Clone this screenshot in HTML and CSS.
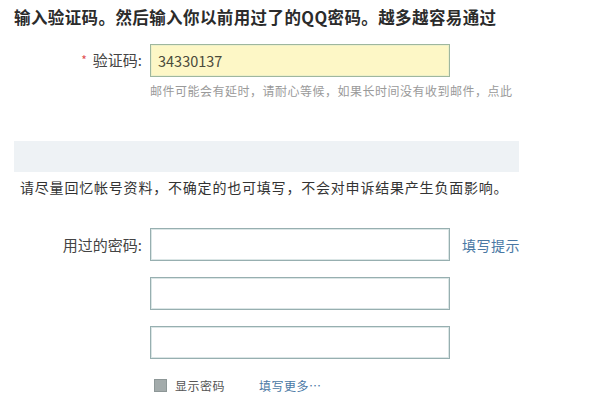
FILE: index.html
```html
<!DOCTYPE html>
<html lang="zh-CN">
<head>
<meta charset="utf-8">
<title>验证</title>
<link rel="stylesheet" href="styles.css">
</head>
<body>
<div class="page">
  <h1 class="title">输入验证码。然后输入你以前用过了的QQ密码。越多越容易通过</h1>

  <div class="row row-code">
    <label class="label"><span class="star">*</span>验证码:</label>
    <div class="field">
      <div class="input input-code">34330137</div>
      <p class="hint">邮件可能会有延时，请耐心等候，如果长时间没有收到邮件，点此</p>
    </div>
  </div>

  <div class="band"></div>

  <p class="intro">请尽量回忆帐号资料，不确定的也可填写，不会对申诉结果产生负面影响。</p>

  <div class="row row-pwd">
    <label class="label">用过的密码:</label>
    <div class="input"></div>
    <a class="link link-tip">填写提示</a>
  </div>
  <div class="row row-pwd">
    <span class="label"></span>
    <div class="input"></div>
  </div>
  <div class="row row-pwd">
    <span class="label"></span>
    <div class="input"></div>
  </div>

  <div class="row row-opts">
    <span class="label"></span>
    <span class="check"></span>
    <span class="check-text">显示密码</span>
    <a class="link link-more">填写更多…</a>
  </div>
</div>
</body>
</html>
```
FILE: styles.css
```css
html, body {
  margin: 0;
  padding: 0;
  background: #ffffff;
}

.page {
  padding: 7px 0 0 14px;
  font-family: "Noto Sans CJK SC", "Noto Sans", sans-serif;
  color: #333333;
}

.title {
  margin: 0;
  font-size: 16.5px;
  letter-spacing: 0.4px;
  line-height: 20px;
  font-weight: bold;
  color: #2b2b2b;
}

.row {
  display: flex;
  align-items: center;
}

.row-code {
  align-items: flex-start;
  margin-top: 17px;
}

.label {
  width: 128px;
  flex: none;
  text-align: right;
  padding-right: 8px;
  font-size: 15px;
  line-height: 32px;
  color: #444444;
}

.star {
  color: #e0504f;
  font-size: 12px;
  margin-right: 6px;
  vertical-align: 1px;
}

.field {
  display: flex;
  flex-direction: column;
}

.input {
  width: 298px;
  height: 31px;
  border: 1px solid #97afb0;
  box-shadow: inset 0 0 0 1px #dbe6e6;
  background: #ffffff;
  box-sizing: content-box;
  font-size: 14px;
  line-height: 31px;
  padding: 0;
}

.input-code {
  background: #fdf7c6;
  border-color: #9eb79e;
  box-shadow: inset 0 0 0 1px #eef0c8;
  color: #4a4a3a;
  padding-left: 7px;
  width: 291px;
  font-size: 14.5px;
}

.hint {
  margin: 6px 0 0 0;
  font-size: 12px;
  letter-spacing: 0.5px;
  line-height: 16px;
  color: #9a9a9a;
  white-space: nowrap;
}

.band {
  margin-top: 42px;
  width: 505px;
  height: 31px;
  background: #eef2f5;
}

.intro {
  margin: 5px 0 0 0;
  padding-left: 6px;
  font-size: 14px;
  letter-spacing: 0.8px;
  line-height: 20px;
  color: #333333;
  white-space: nowrap;
}

.row-pwd {
  margin-top: 16px;
}

.intro + .row-pwd {
  margin-top: 31px;
}

.link {
  color: #4a78a4;
  text-decoration: none;
  font-size: 14px;
  letter-spacing: 0.5px;
}

.link-tip {
  margin-left: 12px;
}

.row-opts {
  margin-top: 18px;
  height: 16px;
}

.row-opts .label {
  line-height: 16px;
}

.check {
  width: 11px;
  height: 11px;
  margin-left: 4px;
  background: #a3abab;
  border: 1px solid #8d9797;
  flex: none;
}

.check-text {
  margin-left: 8px;
  font-size: 12px;
  letter-spacing: 0.5px;
  color: #555555;
}

.link-more {
  margin-left: 34px;
  font-size: 12px;
  letter-spacing: 0.5px;
}
```
